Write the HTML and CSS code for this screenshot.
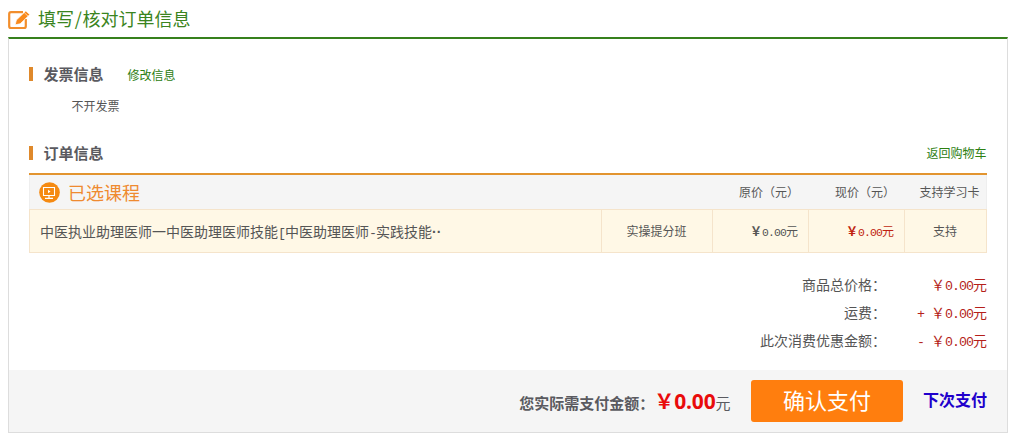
FILE: index.html
```html
<!DOCTYPE html>
<html lang="zh-CN">
<head>
<meta charset="utf-8">
<title>填写/核对订单信息</title>
<link rel="stylesheet" href="styles.css">
</head>
<body>
<header class="page-title">
  <svg class="edit-icon" width="22" height="20" viewBox="0 0 22 20">
    <path d="M15 2.2H3Q1.2 2.2 1.2 4V16.2Q1.2 18 3 18H16Q17.8 18 17.8 16.2V9" fill="none" stroke="#f28e2c" stroke-width="2.2"/>
    <path d="M7.2 14.8L8.4 10L17.8 1L21.8 4.6L12.2 13.8Z" fill="#f98a1c" stroke="#fff" stroke-width=".7"/>
    <path d="M16.2 2.6L20.1 6.2" stroke="#fff" stroke-width=".6"/>
  </svg>
  <h1>填写<span class="slash">/</span>核对订单信息</h1>
</header>
<main class="panel">
  <div class="content">
    <div class="section-head"><h2>发票信息</h2><a class="link" href="#">修改信息</a></div>
    <p class="invoice">不开发票</p>
    <div class="section-head order-head"><h2>订单信息</h2><a class="link back" href="#">返回购物车</a></div>
    <div class="table">
      <div class="thead">
        <div class="course-title">
          <svg width="21" height="21" viewBox="0 0 21 21">
            <circle cx="10.5" cy="10.5" r="10.3" fill="#f58a12"/>
            <path d="M4.5 5.5H15.5V13.5H4.5Z" fill="none" stroke="#fff" stroke-width="1.1"/>
            <path d="M9 7.7V11.3L11.5 9.5Z" fill="#fff"/>
            <path d="M10 13.5V16M6 16.3H14" fill="none" stroke="#fff" stroke-width="1.2"/>
          </svg>
          <h3>已选课程</h3>
        </div>
        <span class="th">原价（元）</span>
        <span class="th">现价（元）</span>
        <span class="th th-card">支持学习卡</span>
      </div>
      <div class="row">
        <div class="cell name"><span>中医执业助理医师一中医助理医师技能<span class="half">[</span>中医助理医师<span class="half">-</span>实践技能<span class="dots">··</span></span></div>
        <div class="cell">实操提分班</div>
        <div class="cell price"><span><span class="mark">￥</span><span class="half">0.00</span>元</span></div>
        <div class="cell price now"><span><span class="mark">￥</span><span class="half">0.00</span>元</span></div>
        <div class="cell">支持</div>
      </div>
    </div>
    <div class="totals">
      <div class="total"><span>商品总价格：</span><span class="amount">￥<span class="half">0.00</span>元</span></div>
      <div class="total"><span>运费：</span><span class="amount"><span class="half">+ </span>￥<span class="half">0.00</span>元</span></div>
      <div class="total"><span>此次消费优惠金额：</span><span class="amount"><span class="half">- </span>￥<span class="half">0.00</span>元</span></div>
    </div>
  </div>
  <footer class="pay-bar">
    <div class="due"><span class="due-label">您实际需支付金额：</span><span class="yen">￥</span><strong>0.00</strong><span class="unit">元</span></div>
    <button class="pay" type="button">确认支付</button>
    <a class="later" href="#">下次支付</a>
  </footer>
</main>
</body>
</html>
```
FILE: styles.css
```css
* { box-sizing: border-box; }
body {
  margin: 0;
  padding: 0 6px 0 8px;
  background: #fff;
  color: #555;
  font: 12px "Noto Sans CJK SC", sans-serif;
}
h1, h2, h3, p { margin: 0; font-weight: 400; }
a { text-decoration: none; }
.half { font-family: "Liberation Mono", monospace; font-size: .95em; letter-spacing: -.0737em; white-space: pre; }
.mark { font-weight: 700; }

.page-title { display: flex; height: 37px; padding-top: 10px; }
.page-title h1 { margin-left: 8px; font-size: 18px; line-height: 17px; color: #3a8420; white-space: nowrap; }
.slash { display: inline-block; width: 8.5px; text-align: center; }

.panel { height: 396px; border: 1px solid #ddd; border-top: 2px solid #36801c; }
.content { height: 331px; padding: 25px 20px 0; }
.section-head { display: flex; align-items: center; height: 20px; }
.section-head h2 { padding-left: 10.5px; border-left: 4px solid #df892b; font-size: 15px; font-weight: 700; line-height: 14px; color: #5a5a60; }
.link { margin-left: 24px; color: #2d8012; }
.back { margin: 0 .5px 2px auto; }
.invoice { margin: 12px 0 0 42.5px; line-height: 20px; }
.order-head { margin-top: 27px; }

.table { margin-top: 10px; border-top: 2px solid #e2942f; }
.thead, .row { display: grid; }
.thead { grid-template-columns: 683px 96px 95px 82px; height: 34px; align-items: center; background: #f5f5f5; border: solid #eee; border-width: 0 1px; }
.course-title { display: flex; align-items: center; padding-left: 9px; }
.course-title h3 { margin-left: 8px; font-size: 18px; line-height: 20px; color: #ef8a30; }
.th { padding: 0 0 2px 26px; white-space: nowrap; }
.th-card { padding-left: 15.5px; }
.row { grid-template-columns: 572px 111px 96px 96px 82px; height: 44px; background: #fff8e6; border: 1px solid #f5e4cb; border-right: 0; }
.cell { display: flex; align-items: center; justify-content: center; padding: 0 1px 1px 0; border-right: 1px solid #f5e4cb; }
.name { justify-content: flex-start; padding-left: 10px; font-size: 14px; white-space: nowrap; }
.dots { display: inline-block; font-family: "Liberation Sans", sans-serif; font-weight: 700; }
.price { justify-content: flex-end; padding-right: 10px; }
.now { color: #c01f10; }

.totals { margin-top: 17px; font-size: 14px; }
.total { display: flex; justify-content: flex-end; align-items: center; height: 28px; }
.amount { width: 101px; text-align: right; color: #b51f1b; }

.pay-bar { display: flex; justify-content: flex-end; align-items: center; height: 62px; padding-right: 20px; background: #f5f5f5; }
.due { display: flex; align-items: baseline; margin-right: 20.5px; padding-top: 2px; color: #5a5a60; line-height: 30px; }
.due-label { font-size: 15px; font-weight: 700; }
.yen, .due strong { font-size: 20px; font-weight: 700; color: #e90b0b; }
.due strong { font-family: "Open Sans", sans-serif; font-size: 21px; letter-spacing: -.2px; }
.unit { font-size: 15px; }
.pay { width: 152px; height: 42px; padding: 0 0 4px; border: 0; border-radius: 3px; background: #ff7e0e; color: #fff; font: 22px "Noto Sans CJK SC", sans-serif; }
.later { margin-left: 20px; padding-bottom: 4px; font-size: 16px; font-weight: 700; color: #2000cc; }
```
